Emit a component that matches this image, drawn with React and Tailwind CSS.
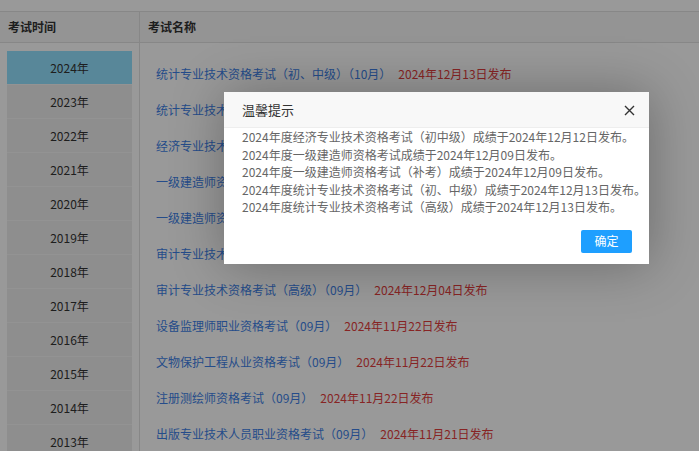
import React from 'react';

const years = ['2024', '2023', '2022', '2021', '2020', '2019', '2018', '2017', '2016', '2015', '2014', '2013', '2012'];

const exams = [
    { name: '统计专业技术资格考试（初、中级）（10月）', date: '2024年12月13日发布' },
    { name: '统计专业技术资格考试（高级）（10月）', date: '2024年12月13日发布' },
    { name: '经济专业技术资格考试（初中级）（11月）', date: '2024年12月12日发布' },
    { name: '一级建造师资格考试（补考）（09月）', date: '2024年12月09日发布' },
    { name: '一级建造师资格考试（09月）', date: '2024年12月09日发布' },
    { name: '审计专业技术资格考试（初、中级）（09月）', date: '2024年12月04日发布' },
    { name: '审计专业技术资格考试（高级）（09月）', date: '2024年12月04日发布' },
    { name: '设备监理师职业资格考试（09月）', date: '2024年11月22日发布' },
    { name: '文物保护工程从业资格考试（09月）', date: '2024年11月22日发布' },
    { name: '注册测绘师资格考试（09月）', date: '2024年11月22日发布' },
    { name: '出版专业技术人员职业资格考试（09月）', date: '2024年11月21日发布' },
];

const notices = [
    '2024年度经济专业技术资格考试（初中级）成绩于2024年12月12日发布。',
    '2024年度一级建造师资格考试成绩于2024年12月09日发布。',
    '2024年度一级建造师资格考试（补考）成绩于2024年12月09日发布。',
    '2024年度统计专业技术资格考试（初、中级）成绩于2024年12月13日发布。',
    '2024年度统计专业技术资格考试（高级）成绩于2024年12月13日发布。',
];

const App = () => {
    return (
        <div className="relative w-[699px] h-[451px] overflow-hidden bg-white font-['Noto_Sans_CJK_SC',sans-serif] text-[12px] text-[#333]">
            {/* page */}
            <div className="h-[12px] border-b border-[#e2e2e2]" />
            <div className="flex h-[31px] bg-[#f7f7f7] border-b border-[#e2e2e2] font-bold">
                <div className="w-[140px] border-r border-[#e2e2e2] pl-[8px] flex items-center">考试时间</div>
                <div className="flex-1 pl-[8px] flex items-center">考试名称</div>
            </div>
            <div className="flex">
                <div className="w-[140px] border-r border-[#e2e2e2] pt-[8px] px-[7px] shrink-0">
                    {years.map((y, i) => (
                        <div
                            key={y}
                            className={
                                i === 0
                                    ? 'h-[34px] flex items-center justify-center bg-[#93e2ff] border-b border-[#f6f6f6]'
                                    : 'h-[34px] flex items-center justify-center bg-[#ededed] border-b border-[#f6f6f6]'
                            }
                        >
                            {y}年
                        </div>
                    ))}
                </div>
                <div className="flex-1 pt-[13px] pl-[16px]">
                    {exams.map((e, i) => (
                        <div key={i} className="h-[36px] flex items-center whitespace-nowrap">
                            <a href="#" className="text-[#3e7fe6]">{e.name}</a>
                            <span className="ml-[7px] text-[#e23d3d]">{e.date}</span>
                        </div>
                    ))}
                </div>
            </div>

            {/* shade */}
            <div className="absolute inset-0 bg-black/40" />

            {/* dialog */}
            <div className="absolute left-[224px] top-[92px] w-[425px] bg-white shadow-[1px_1px_50px_rgba(0,0,0,0.3)]">
                <div className="relative h-[36px] bg-[#f8f8f8] border-b border-[#eeeeee] pl-[18px] flex items-center text-[13px] text-[#333]">
                    温馨提示
                    <button className="absolute right-[14px] top-[12px] w-[12px] h-[12px] flex items-center justify-center">
                        <svg width="11" height="11" viewBox="0 0 11 11">
                            <path d="M1 1 L10 10 M10 1 L1 10" stroke="#333" strokeWidth="1.4" fill="none" />
                        </svg>
                    </button>
                </div>
                <div className="pl-[18px] text-[12px] leading-[17.5px] text-[#666] whitespace-nowrap">
                    {notices.map((n, i) => (
                        <div key={i}>{n}</div>
                    ))}
                </div>
                <div className="flex justify-end pr-[17px] pt-[14px] pb-[11px]">
                    <button className="w-[51px] h-[23px] bg-[#1e9fff] text-white text-[12px] rounded-[2px]">确定</button>
                </div>
            </div>
        </div>
    );
};

export default App;
